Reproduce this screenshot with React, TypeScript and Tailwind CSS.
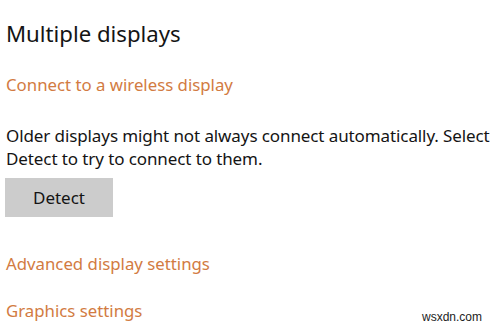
export default function App() {
  return (
    <div
      className="relative w-[495px] h-[324px] overflow-hidden bg-white pl-[6px] text-[#141414]"
      style={{ fontFamily: '"Noto Sans", "Open Sans", sans-serif' }}
    >
      <h1 className="pt-[19px] text-[22.2px] leading-[30px] font-normal">Multiple displays</h1>
      <a className="mt-[24px] block text-[16.8px] leading-[23px] text-[#d27b42]">Connect to a wireless display</a>
      <p className="mt-[28px] whitespace-nowrap text-[17px] leading-[23px] tracking-[-0.1px]">
        Older displays might not always connect automatically. Select
        <br />
        Detect to try to connect to them.
      </p>
      <button className="mt-[8px] -ml-[1px] w-[108px] h-[39px] bg-[#cccccc] text-[17px] leading-[23px] text-[#141414]">
        Detect
      </button>
      <a className="mt-[35px] block text-[16.8px] leading-[23px] text-[#d27b42]">Advanced display settings</a>
      <a className="mt-[24px] block text-[16.8px] leading-[23px] text-[#d27b42]">Graphics settings</a>
      <span
        className="absolute left-[422px] top-[308px] text-[12px] text-[#222]"
        style={{ fontFamily: '"Liberation Sans", Arial, sans-serif' }}
      >
        wsxdn.com
      </span>
    </div>
  );
}
